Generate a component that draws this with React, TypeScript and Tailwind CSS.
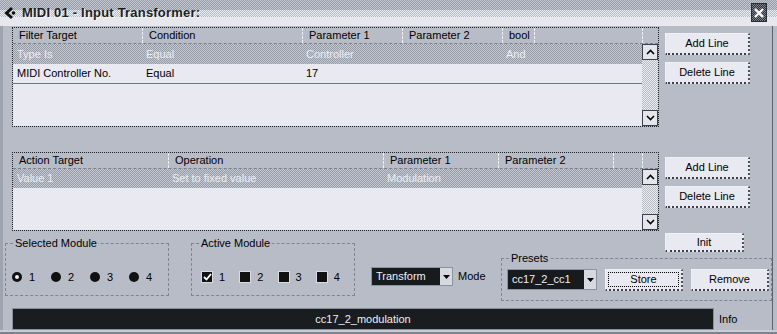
import type { ReactNode } from "react";

const dither =
  "[background-image:repeating-conic-gradient(#959ca8_0_25%,#c3c8d1_0_50%)] [background-size:2px_2px]";
const ditherLight =
  "[background-image:repeating-conic-gradient(#b4b9c3_0_25%,#eceef2_0_50%)] [background-size:2px_2px]";

function Btn({ label, w, focus }: { label: string; w: string; focus?: boolean }) {
  return (
    <div
      className={[
        w,
        "flex h-[22px] items-stretch bg-[#e8e9f1] border-t border-l border-[#f6f7fa] border-r-2 border-b-2 border-r-[#4a4f58] border-b-[#3a3e46] border-dotted text-black",
      ].join(" ")}
    >
      <div
        className={[
          "flex flex-1 items-center justify-center",
          focus ? "m-[2px] border border-dotted border-black" : "",
        ].join(" ")}
      >
        {label}
      </div>
    </div>
  );
}

function ScrollBar() {
  return (
    <div className="flex w-[16px] flex-col">
      <div className="flex h-[16px] items-center justify-center border border-[#3c414a] bg-[#e4e6ec]">
        <svg width="9" height="6" viewBox="0 0 9 6">
          <polyline points="1,5 4.5,1.5 8,5" fill="none" stroke="#000" strokeWidth="1.6" />
        </svg>
      </div>
      <div className={["flex-1", ditherLight].join(" ")} />
      <div className="flex h-[16px] items-center justify-center border border-[#3c414a] bg-[#e4e6ec]">
        <svg width="9" height="6" viewBox="0 0 9 6">
          <polyline points="1,1 4.5,4.5 8,1" fill="none" stroke="#000" strokeWidth="1.6" />
        </svg>
      </div>
    </div>
  );
}

function HeadCell({ w, children, first }: { w: string; children?: ReactNode; first?: boolean }) {
  return (
    <div
      className={[
        w,
        "flex h-full items-center truncate pl-[6px]",
        first ? "" : "border-l border-dashed border-[#eef0f5]",
      ].join(" ")}
    >
      {children}
    </div>
  );
}

function Cell({ w, children }: { w: string; children?: ReactNode }) {
  return <div className={[w, "truncate pl-[4px]"].join(" ")}>{children}</div>;
}

function Group({
  label,
  className,
  children,
}: {
  label: string;
  className: string;
  children: ReactNode;
}) {
  return (
    <div className={["relative border border-dashed border-[#7f8592]", className].join(" ")}>
      <span className="absolute -top-[7px] left-[8px] bg-[#b7bcc7] px-[1px] leading-[13px]">
        {label}
      </span>
      {children}
    </div>
  );
}

function Radio({ n, on }: { n: number; on?: boolean }) {
  return (
    <div className="flex w-[40px] items-center gap-[7px]">
      <div className="flex h-[10px] w-[10px] items-center justify-center rounded-full bg-[#111]">
        {on ? <div className="h-[4px] w-[4px] rounded-full bg-[#f2f3f6]" /> : null}
      </div>
      <span>{n}</span>
    </div>
  );
}

function Check({ n, on }: { n: number; on?: boolean }) {
  return (
    <div className="flex w-[40px] items-center gap-[6px]">
      <div className="flex h-[12px] w-[12px] items-center justify-center border border-[#d8dbe2] bg-[#111]">
        {on ? (
          <svg width="9" height="8" viewBox="0 0 9 8">
            <polyline points="1,4 3.5,6.5 8,1" fill="none" stroke="#fff" strokeWidth="1.8" />
          </svg>
        ) : null}
      </div>
      <span>{n}</span>
    </div>
  );
}

function Combo({ text, w }: { text: string; w: string }) {
  return (
    <div className={[w, "flex items-stretch border border-[#8c929e] bg-[#181b1e]"].join(" ")}>
      <div className="flex flex-1 items-center pl-[4px] text-[#eef0f3]">{text}</div>
      <div className="flex w-[12px] items-center justify-center bg-[#d6d9e0]">
        <svg width="7" height="4" viewBox="0 0 7 4">
          <polygon points="0,0 7,0 3.5,4" fill="#000" />
        </svg>
      </div>
    </div>
  );
}

export default function App() {
  return (
    <div className="relative h-[334px] w-[777px] overflow-hidden bg-[#b7bcc7] font-['Liberation_Sans',Arial,sans-serif] text-[11px] text-black">
      {/* title bar */}
      <div className="relative h-[26px] bg-[#e6e8ee]">
        <div className={["h-[10px]", dither].join(" ")} />
        <div className={["h-[7px]", ditherLight].join(" ")} />
        <div className="absolute inset-0 flex items-center pb-[1px]">
          <svg width="16" height="14" viewBox="0 0 16 14" className="ml-[3px]">
            <path d="M9 2 L3.5 7 L9 12" fill="none" stroke="#111" strokeWidth="3" />
            <circle cx="10.5" cy="7" r="1.8" fill="#111" />
          </svg>
          <span className="ml-[3px] text-[13px] font-bold tracking-[0.2px] text-[#1c1f24] [text-shadow:1px_1px_0_#f4f5f8]">
            MIDI 01 - Input Transformer:
          </span>
        </div>
        <div className="absolute right-[10px] top-[3px] flex h-[19px] w-[16px] items-center justify-center border border-[#2a2e34] [background-image:repeating-conic-gradient(#2e3238_0_25%,#7e848e_0_50%)] [background-size:2px_2px]">
          <svg width="12" height="12" viewBox="0 0 12 12">
            <path d="M2 2 L10 10 M10 2 L2 10" stroke="#fff" strokeWidth="2.4" />
          </svg>
        </div>
      </div>

      {/* body */}
      <div className="flex w-[773px] flex-col border-r border-[#5a5f68] border-l-[3px] border-l-[#9ea4af]">
        {/* filter section */}
        <div className="flex pl-[9px] pt-[1px]">
          <div className="flex h-[100px] w-[647px] flex-col border border-dotted border-[#1c2026]">
            <div className="flex h-[16px] border-b border-dashed border-[#7a808c]">
              <HeadCell w="w-[129px]" first>Filter Target</HeadCell>
              <HeadCell w="w-[160px]">Condition</HeadCell>
              <HeadCell w="w-[100px]">Parameter 1</HeadCell>
              <HeadCell w="w-[100px]">Parameter 2</HeadCell>
              <HeadCell w="w-[32px]">bool</HeadCell>
              <HeadCell w="w-[108px]" />
              <HeadCell w="w-[16px]" />
            </div>
            <div className="flex flex-1">
              <div className="flex w-[629px] flex-col bg-[#e8e9f1]">
                <div className={["flex h-[20px] items-center text-[#eceef2]", dither].join(" ")}>
                  <Cell w="w-[129px]">Type Is</Cell>
                  <Cell w="w-[160px]">Equal</Cell>
                  <Cell w="w-[100px]">Controller</Cell>
                  <Cell w="w-[100px]" />
                  <Cell w="w-[32px]">And</Cell>
                </div>
                <div className="flex h-[20px] items-center border-b border-[#6f7581]">
                  <Cell w="w-[129px]">MIDI Controller No.</Cell>
                  <Cell w="w-[160px]">Equal</Cell>
                  <Cell w="w-[100px]">17</Cell>
                </div>
              </div>
              <ScrollBar />
            </div>
          </div>
          <div className="ml-[6px] flex flex-col gap-[7px] pt-[6px]">
            <Btn label="Add Line" w="w-[85px]" />
            <Btn label="Delete Line" w="w-[85px]" />
          </div>
        </div>

        {/* action section */}
        <div className="mt-[25px] flex pl-[9px]">
          <div className="flex h-[79px] w-[647px] flex-col border border-dotted border-[#1c2026]">
            <div className="flex h-[16px] border-b border-dashed border-[#7a808c]">
              <HeadCell w="w-[155px]" first>Action Target</HeadCell>
              <HeadCell w="w-[215px]">Operation</HeadCell>
              <HeadCell w="w-[115px]">Parameter 1</HeadCell>
              <HeadCell w="w-[115px]">Parameter 2</HeadCell>
              <HeadCell w="w-[29px]" />
              <HeadCell w="w-[16px]" />
            </div>
            <div className="flex flex-1">
              <div className="flex w-[629px] flex-col bg-[#e8e9f1]">
                <div className={["flex h-[19px] items-center text-[#eceef2]", dither].join(" ")}>
                  <Cell w="w-[155px]">Value 1</Cell>
                  <Cell w="w-[215px]">Set to fixed value</Cell>
                  <Cell w="w-[115px]">Modulation</Cell>
                </div>
              </div>
              <ScrollBar />
            </div>
          </div>
          <div className="ml-[6px] flex flex-col gap-[7px] pt-[5px]">
            <Btn label="Add Line" w="w-[85px]" />
            <Btn label="Delete Line" w="w-[85px]" />
          </div>
        </div>

        {/* bottom controls */}
        <div className="flex h-[76px]">
          <Group label="Selected Module" className="ml-[2px] mt-[12px] h-[53px] w-[164px]">
            <div className="flex pl-[6px] pt-[25px]">
              <Radio n={1} on />
              <Radio n={2} />
              <Radio n={3} />
              <Radio n={4} />
            </div>
          </Group>
          <Group label="Active Module" className="ml-[22px] mt-[12px] h-[53px] w-[164px]">
            <div className="flex pl-[9px] pt-[25px]">
              <Check n={1} on />
              <Check n={2} />
              <Check n={3} />
              <Check n={4} />
            </div>
          </Group>
          <div className="ml-[16px] mt-[36px] flex h-[19px] w-[130px] items-center gap-[5px] self-start">
            <Combo text="Transform" w="w-[82px] h-[19px]" />
            <span>Mode</span>
          </div>
          <div className="flex w-[271px] flex-col">
            <div className="ml-[164px] mt-[2px]">
              <Btn label="Init" w="w-[79px] !h-[19px]" />
            </div>
            <Group label="Presets" className="mt-[6px] h-[43px] w-[271px]">
              <div className="flex gap-[8px] pl-[5px] pt-[10px]">
                <Combo text="cc17_2_cc1" w="w-[90px] h-[21px]" />
                <Btn label="Store" w="w-[78px]" focus />
                <Btn label="Remove" w="w-[78px]" />
              </div>
            </Group>
          </div>
        </div>

        {/* info bar */}
        <div className="mt-[1px] flex h-[22px] items-center pl-[9px]">
          <div className="flex h-[22px] w-[702px] items-center justify-center border border-[#8a909b] bg-[#191d1f] text-[#eef0f3]">
            cc17_2_modulation
          </div>
          <span className="ml-[5px]">Info</span>
        </div>
      </div>
      <div className="h-[2px] bg-[#c8ccd4]" />
      <div className="h-[3px] bg-[#7c828e]" />
    </div>
  );
}
